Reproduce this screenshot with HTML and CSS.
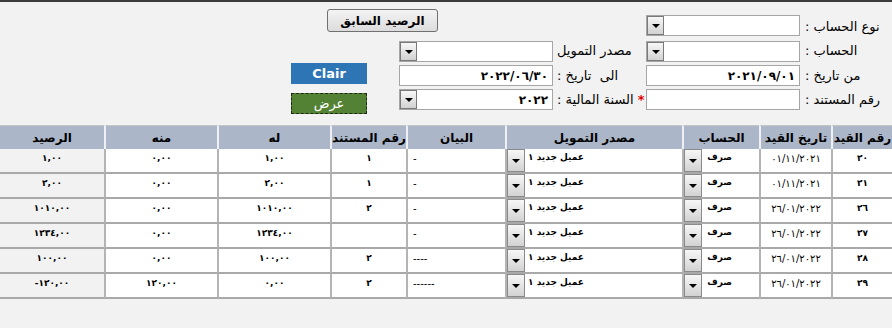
FILE: index.html
```html
<!DOCTYPE html>
<html lang="ar" dir="rtl">
<head>
  <meta charset="UTF-8" />
  <title>كشف حساب</title>
  <link rel="stylesheet" href="styles.css">
</head>
<body>
  <!-- Filters -->
  <div class="filters">
    <label class="lbl r1 first">نوع الحساب :</label>
    <div class="field select r1 c2"><span class="val"></span><span class="arrow"></span></div>
    <button class="prev-btn">الرصيد السابق</button>

    <label class="lbl r2">الحساب :</label>
    <div class="field select r2 c2"><span class="val"></span><span class="arrow"></span></div>
    <label class="lbl mid r2">مصدر التمويل</label>
    <div class="field select r2 c4"><span class="val"></span><span class="arrow"></span></div>

    <label class="lbl r3">من تاريخ :</label>
    <div class="field r3 c2"><span class="val">٢٠٢١/٠٩/٠١</span></div>
    <label class="lbl mid r3">الى&nbsp; تاريخ :</label>
    <div class="field r3 c4"><span class="val">٢٠٢٢/٠٦/٣٠</span></div>
    <button class="clear-btn r3">Clair</button>

    <label class="lbl r4">رقم المستند :</label>
    <div class="field r4 c2"><span class="val"></span></div>
    <label class="lbl mid r4"><span class="req">*</span> السنة المالية :</label>
    <div class="field select r4 c4"><span class="val">٢٠٢٢</span><span class="arrow"></span></div>
    <button class="show-btn r4">عرض</button>
  </div>

  <!-- Entries -->
  <table class="entries">
    <colgroup>
      <col style="width:61px"><col style="width:72px"><col style="width:77px">
      <col style="width:177px"><col style="width:99px"><col style="width:76px">
      <col style="width:113px"><col style="width:113px"><col style="width:104px">
    </colgroup>
    <thead>
      <tr>
        <th>رقم القيد</th>
        <th>تاريخ القيد</th>
        <th>الحساب</th>
        <th>مصدر التمويل</th>
        <th>البيان</th>
        <th>رقم المستند</th>
        <th>له</th>
        <th>منه</th>
        <th>الرصيد</th>
      </tr>
    </thead>
    <tbody id="rows"></tbody>
  </table>

  <script>
    const entries = [
      ["٢٠", "٠١/١١/٢٠٢١", "-", "١", "١,٠٠", "٠,٠٠", "١,٠٠"],
      ["٢١", "٠١/١١/٢٠٢١", "-", "١", "٢,٠٠", "٠,٠٠", "٢,٠٠"],
      ["٢٦", "٢٦/٠١/٢٠٢٢", "-", "٢", "١٠١٠,٠٠", "٠,٠٠", "١٠١٠,٠٠"],
      ["٢٧", "٢٦/٠١/٢٠٢٢", "-", "", "١٢٣٤,٠٠", "٠,٠٠", "١٢٣٤,٠٠"],
      ["٢٨", "٢٦/٠١/٢٠٢٢", "----", "٢", "١٠٠,٠٠", "٠,٠٠", "١٠٠,٠٠"],
      ["٢٩", "٢٦/٠١/٢٠٢٢", "------", "٢", "٠,٠٠", "١٢٠,٠٠", "١٢٠,٠٠-"]
    ];

    const tbody = document.getElementById("rows");
    entries.forEach(e => {
      const tr = document.createElement("tr");
      tr.innerHTML = `
        <td class="num">${e[0]}</td>
        <td class="date">${e[1]}</td>
        <td class="pick"><div class="cell-select account"><span>صرف</span><span class="arrow"></span></div></td>
        <td class="pick"><div class="cell-select source"><span>عميل جديد ١</span><span class="arrow"></span></div></td>
        <td class="desc">${e[2]}</td>
        <td class="num">${e[3]}</td>
        <td class="num">${e[4]}</td>
        <td class="num">${e[5]}</td>
        <td class="num balance">${e[6]}</td>`;
      tbody.appendChild(tr);
    });
  </script>
</body>
</html>
```

FILE: styles.css
```css
* {
  margin: 0;
  padding: 0;
  box-sizing: border-box;
}

body {
  background: #f2f2f2;
  border-top: 2px solid #3b3b3b;
  font-family: "DejaVu Sans", sans-serif;
  color: #000;
  direction: rtl;
}

/* ---------- filters ---------- */
.filters {
  display: grid;
  grid-template-columns: 87px 159px 93px 154px 32px 76px;
  grid-template-rows: 27px 23px 21px 21px;
  row-gap: 3px;
  padding-top: 7px;
}

.r1 { grid-row: 1; }
.r2 { grid-row: 2; }
.r3 { grid-row: 3; }
.r4 { grid-row: 4; }
.c2 { grid-column: 2; }
.c4 { grid-column: 4; }

.lbl {
  grid-column: 1;
  align-self: center;
  text-align: left;
  font-size: 13px;
  white-space: nowrap;
}

.lbl.first {
  align-self: end;
  padding-bottom: 2px;
}

.lbl.mid {
  grid-column: 3;
  padding-left: 4px;
}

.req {
  color: #e00000;
  font-weight: bold;
}

.field {
  width: 154px;
  height: 21px;
  justify-self: end;
  align-self: end;
  background: #fff;
  border: 1px solid #a6a6a6;
  display: flex;
  align-items: center;
}

.field .val {
  flex: 1;
  padding-right: 4px;
  font-size: 12px;
  font-weight: bold;
}

.arrow {
  width: 17px;
  flex-shrink: 0;
  align-self: stretch;
  border: 1px solid #7a7a7a;
  background: linear-gradient(#f7f7f7, #d2d2d2);
  display: flex;
  justify-content: center;
  align-items: center;
}

.arrow::after {
  content: "";
  border-left: 4px solid transparent;
  border-right: 4px solid transparent;
  border-top: 4px solid #000;
}

.prev-btn {
  grid-column: 4 / 7;
  grid-row: 1;
  justify-self: end;
  align-self: start;
  width: 111px;
  height: 23px;
  margin-left: 36px;
  font-family: inherit;
  font-size: 12px;
  font-weight: bold;
  border: 1px solid #707070;
  border-radius: 3px;
  background: linear-gradient(#f4f4f4, #dcdcdc);
  cursor: pointer;
}

.clear-btn,
.show-btn {
  grid-column: 6;
  width: 76px;
  height: 21px;
  align-self: start;
  font-family: inherit;
  color: #fff;
  cursor: pointer;
}

.clear-btn {
  margin-top: -2px;
  background: #2e75b6;
  border: none;
  font-size: 13px;
  font-weight: bold;
}

.show-btn {
  margin-top: 4px;
  background: #548235;
  border: 1px dashed #1e2a14;
  font-size: 13px;
}

/* ---------- table ---------- */
.entries {
  width: 892px;
  margin-top: 15px;
  table-layout: fixed;
  border-collapse: separate;
  border-spacing: 0;
}

.entries th {
  height: 24px;
  background: #abb7c9;
  border-top: 1px solid #c4c4c4;
  border-left: 2px solid #eef0f4;
  font-size: 12px;
  font-weight: bold;
  text-align: center;
  white-space: nowrap;
}

.entries th:last-child,
.entries td:last-child {
  border-left: none;
}

.entries td {
  height: 25px;
  background: #fff;
  border-left: 2px solid #b4b4b4;
  border-bottom: 2px solid #a9a9a9;
  vertical-align: top;
  padding-top: 4px;
  font-size: 9px;
  text-align: center;
  white-space: nowrap;
}

.entries td.num {
  font-weight: bold;
}

.entries td.date {
  font-size: 10px;
}

.entries td.balance {
  background: #f2f2f2;
}

.entries td.desc {
  text-align: left;
  padding-left: 5px;
  font-size: 10px;
}

.entries td.pick {
  padding: 0;
}

.cell-select {
  display: flex;
  justify-content: flex-end;
  height: 23px;
}

.cell-select span:first-child {
  text-align: right;
  padding-top: 3px;
  font-size: 9px;
  font-weight: bold;
}

.cell-select.account span:first-child {
  width: 30px;
}

.cell-select.source span:first-child {
  padding-left: 3px;
}

.cell-select .arrow {
  width: 18px;
  border-color: #8a8a8a;
}
```
